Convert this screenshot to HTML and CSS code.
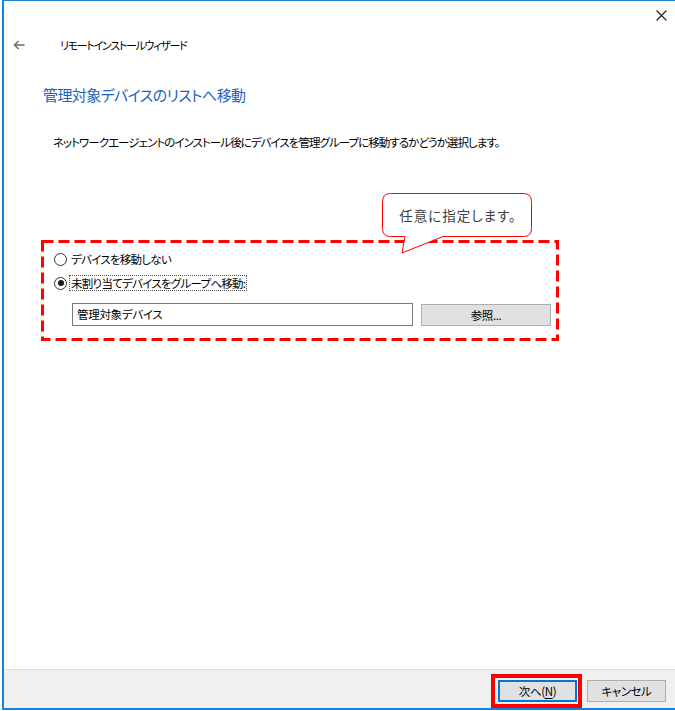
FILE: index.html
```html
<!DOCTYPE html>
<html lang="ja">
<head>
<meta charset="utf-8">
<title>リモートインストールウィザード</title>
<link rel="stylesheet" href="styles.css">
</head>
<body>
<div class="window">
  <div class="content">
    <div class="titlebar">
      <svg class="close" width="11" height="11" viewBox="0 0 11 11"><path d="M0.5 0.5 L10.5 10.5 M10.5 0.5 L0.5 10.5" stroke="#1a1a1a" stroke-width="1.1" fill="none"/></svg>
    </div>
    <div class="navrow">
      <svg class="back" width="12" height="10" viewBox="0 0 12 10"><path d="M11.5 5 H1.5 M5.5 1 L1.5 5 L5.5 9" stroke="#6d6d6d" stroke-width="1.5" fill="none"/></svg>
      <span class="wiz-title">リモートインストールウィザード</span>
    </div>
    <h1 class="heading">管理対象デバイスのリストへ移動</h1>
    <p class="desc">ネットワークエージェントのインストール後にデバイスを管理グループに移動するかどうか選択します。</p>
    <div class="options">
      <svg class="dash" width="518" height="101" viewBox="0 0 518 101"><rect x="1.5" y="1.5" width="515" height="98" fill="none" stroke="#ff0000" stroke-width="3" stroke-dasharray="11 5"/></svg>
      <div class="radio-row">
        <span class="radio"></span>
        <span class="label">デバイスを移動しない</span>
      </div>
      <div class="radio-row second">
        <span class="radio checked"></span>
        <span class="label focus">未割り当てデバイスをグループへ移動:</span>
      </div>
      <div class="input-row">
        <div class="textbox">管理対象デバイス</div>
        <div class="btn browse">参照...</div>
      </div>
      <div class="callout">
        <svg class="callout-shape" width="152" height="64" viewBox="0 0 152 64"><path d="M8.5 0.5 H141.5 Q149.5 0.5 149.5 8.5 V35.5 Q149.5 43.5 141.5 43.5 H61 L20 60 L23 43.5 H8.5 Q0.5 43.5 0.5 35.5 V8.5 Q0.5 0.5 8.5 0.5 Z" fill="#ffffff" stroke="#ff0000" stroke-width="1"/></svg>
        <span class="callout-text">任意に指定します。</span>
      </div>
    </div>
  </div>
  <div class="footer">
    <div class="btn default">次へ(<u>N</u>)<span class="highlight"></span></div>
    <div class="btn">キャンセル</div>
  </div>
</div>
</body>
</html>
```
FILE: styles.css
```css
html, body {
  margin: 0;
  padding: 0;
  background: #ffffff;
}
body {
  font-family: "Noto Sans CJK JP", "Noto Sans", sans-serif;
  font-feature-settings: "palt";
  color: #000;
}
.window {
  box-sizing: border-box;
  margin-left: 2px;
  width: 673px;
  height: 710px;
  border-left: 2px solid #1883d7;
  border-top: 1px solid #1883d7;
  border-bottom: 2px solid #1883d7;
  display: flex;
  flex-direction: column;
}
.content {
  flex: 1;
  display: flex;
  flex-direction: column;
}
.titlebar {
  height: 29px;
  display: flex;
  justify-content: flex-end;
  align-items: center;
  padding-right: 8px;
}
.close {
  display: block;
}
.navrow {
  height: 30px;
  display: flex;
  align-items: center;
}
.back {
  margin-left: 9px;
  display: block;
}
.wiz-title {
  margin-left: 35px;
  font-size: 11px;
  letter-spacing: -1.3px;
  line-height: 16px;
}
.heading {
  margin: 25px 0 0 39px;
  font-size: 15px;
  letter-spacing: -0.6px;
  line-height: 20px;
  font-weight: normal;
  color: #1f5fc4;
}
.desc {
  margin: 29px 0 0 49px;
  font-size: 11.5px;
  letter-spacing: -0.95px;
  line-height: 16px;
}
.options {
  position: relative;
  box-sizing: border-box;
  margin: 90px 0 0 37px;
  width: 518px;
  height: 101px;
  padding: 11px 0 0 13px;
}
.dash {
  position: absolute;
  left: 0;
  top: 0;
}
.radio-row {
  display: flex;
  align-items: center;
  height: 16px;
}
.radio-row.second {
  margin-top: 8px;
}
.radio {
  box-sizing: border-box;
  width: 13px;
  height: 13px;
  border: 1px solid #333;
  border-radius: 50%;
  background: #fff;
  display: flex;
  align-items: center;
  justify-content: center;
}
.radio.checked::after {
  content: "";
  width: 6px;
  height: 6px;
  border-radius: 50%;
  background: #1a1a1a;
}
.label {
  margin-left: 2px;
  font-size: 11.5px;
  letter-spacing: -0.72px;
  line-height: 14px;
  padding: 0 1px;
  border: 1px dotted transparent;
}
.label.focus {
  border-color: #555;
}
.input-row {
  display: flex;
  align-items: center;
  margin: 12px 0 0 18px;
  gap: 8px;
}
.textbox {
  box-sizing: border-box;
  width: 341px;
  height: 23px;
  border: 1px solid #7a7a7a;
  font-size: 11.5px;
  letter-spacing: -0.3px;
  line-height: 21px;
  padding-left: 4px;
}
.btn {
  position: relative;
  box-sizing: border-box;
  height: 22px;
  width: 79px;
  background: #e1e1e1;
  border: 1px solid #adadad;
  font-size: 11.5px;
  letter-spacing: -0.4px;
  line-height: 20px;
  text-align: center;
}
.btn.browse {
  width: 130px;
}
.btn.default {
  border: 2px solid #0078d7;
  line-height: 18px;
}
.btn u {
  text-underline-offset: 2px;
}
.highlight {
  position: absolute;
  left: -9px;
  right: -7px;
  top: -8px;
  bottom: -8px;
  border: 4px solid #ff0000;
}
.callout {
  position: absolute;
  left: 341px;
  top: -47px;
  width: 150px;
  height: 44px;
  display: flex;
  align-items: center;
  justify-content: center;
}
.callout-shape {
  position: absolute;
  left: 0;
  top: 0;
}
.callout-text {
  position: relative;
  font-size: 13.5px;
  letter-spacing: 1px;
  color: #404040;
  margin-left: 2px;
}
.footer {
  height: 39px;
  box-sizing: border-box;
  border-top: 1px solid #dfdfdf;
  background: #f0f0f0;
  display: flex;
  justify-content: flex-end;
  align-items: flex-start;
  padding: 10px 9px 0 0;
  gap: 10px;
}
```
